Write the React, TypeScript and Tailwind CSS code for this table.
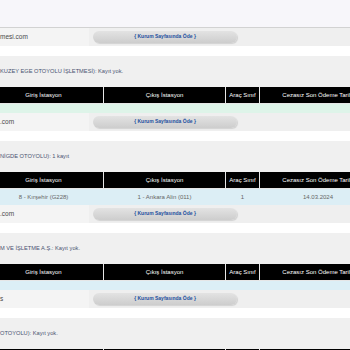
import React from 'react';

const font = { fontFamily: '"Liberation Sans", Arial, sans-serif' };

interface Block {
  title: string;
  row?: string[];
  empty: string;
  site: string;
}

const blocks: Block[] = [
  { title: 'KUZEY EGE OTOYOLU İŞLETMESİ): Kayıt yok.', empty: 'bg-[#def4e9]', site: '.com' },
  {
    title: 'NİGDE OTOYOLU): 1 kayıt',
    row: ['8 - Kırşehir (G228)', '1 - Ankara Alin (011)', '1', '14.03.2024'],
    empty: 'bg-[#dceef5]',
    site: '.com',
  },
  { title: 'M VE İŞLETME A.Ş.: Kayıt yok.', empty: 'bg-[#dceff6]', site: 's' },
];

const headers = ['Giriş İstasyon', 'Çıkış İstasyon', 'Araç Sınıf', 'Cezasız Son Ödeme Tarihi'];

function PayRow({ site }: { site: string }) {
  return (
    <div className="flex h-[18px] items-center bg-[#efefef]">
      <div className="flex h-full w-[89px] items-center bg-[#f4f4f4] text-[6.5px] text-[#4a4a4a]">{site}</div>
      <div className="ml-[4px] flex h-[12px] w-[144px] items-center justify-center rounded-[6px] bg-gradient-to-b from-[#e3e3e3] to-[#cdcdcd] shadow-[1px_1px_1px_rgba(0,0,0,0.12)]">
        <span className="text-[5px] font-bold text-[#1d4f9e]">{'{ Kurum Sayfasında Öde }'}</span>
      </div>
    </div>
  );
}

function Cells({ values, dark }: { values: string[]; dark?: boolean }) {
  const widths = ['w-[119px]', 'w-[121px]', 'w-[33px]', 'w-[116px]'];
  return (
    <>
      {values.map((v, i) => (
        <div
          key={i}
          className={`${widths[i]} flex shrink-0 items-center justify-center ${
            dark ? 'bg-black text-white' : 'text-[#666]'
          }`}
        >
          {v}
        </div>
      ))}
    </>
  );
}

export default function App() {
  return (
    <div className="w-[350px] h-[350px] overflow-hidden bg-white" style={font}>
      <div className="h-[27px] bg-[#f7f6fa]" />
      <div className="h-px bg-[#d2d2d2]" />
      <PayRow site="mesi.com" />
      <div className="h-[10px] bg-white" />

      {blocks.map((b, i) => (
        <div key={i}>
          <div className="bg-[#f0f0f0]">
            <div className="flex h-[31px] items-center text-[5.7px] text-[#4a5370]">{b.title}</div>
            <div className="ml-[-16px] flex flex-col gap-px bg-[#e6e6e6]">
              <div className="flex h-[16px] gap-px text-[6px]">
                <Cells dark values={headers} />
              </div>
              {b.row ? (
                <div className="flex h-[16px] gap-px text-[6px]">
                  <div className={`flex gap-px ${b.empty}`}>
                    <Cells values={b.row} />
                  </div>
                </div>
              ) : (
                <div className={`h-[9px] ${b.empty}`} />
              )}
            </div>
          </div>
          <PayRow site={b.site} />
          <div className="h-[10px] bg-white" />
        </div>
      ))}

      <div className="bg-[#f0f0f0]">
        <div className="flex h-[31px] items-center text-[5.7px] text-[#4a5370]">OTOYOLU): Kayıt yok.</div>
        <div className="ml-[-16px] flex h-[16px] gap-px bg-[#e6e6e6] text-[6px]">
          <Cells dark values={headers} />
        </div>
      </div>
    </div>
  );
}
